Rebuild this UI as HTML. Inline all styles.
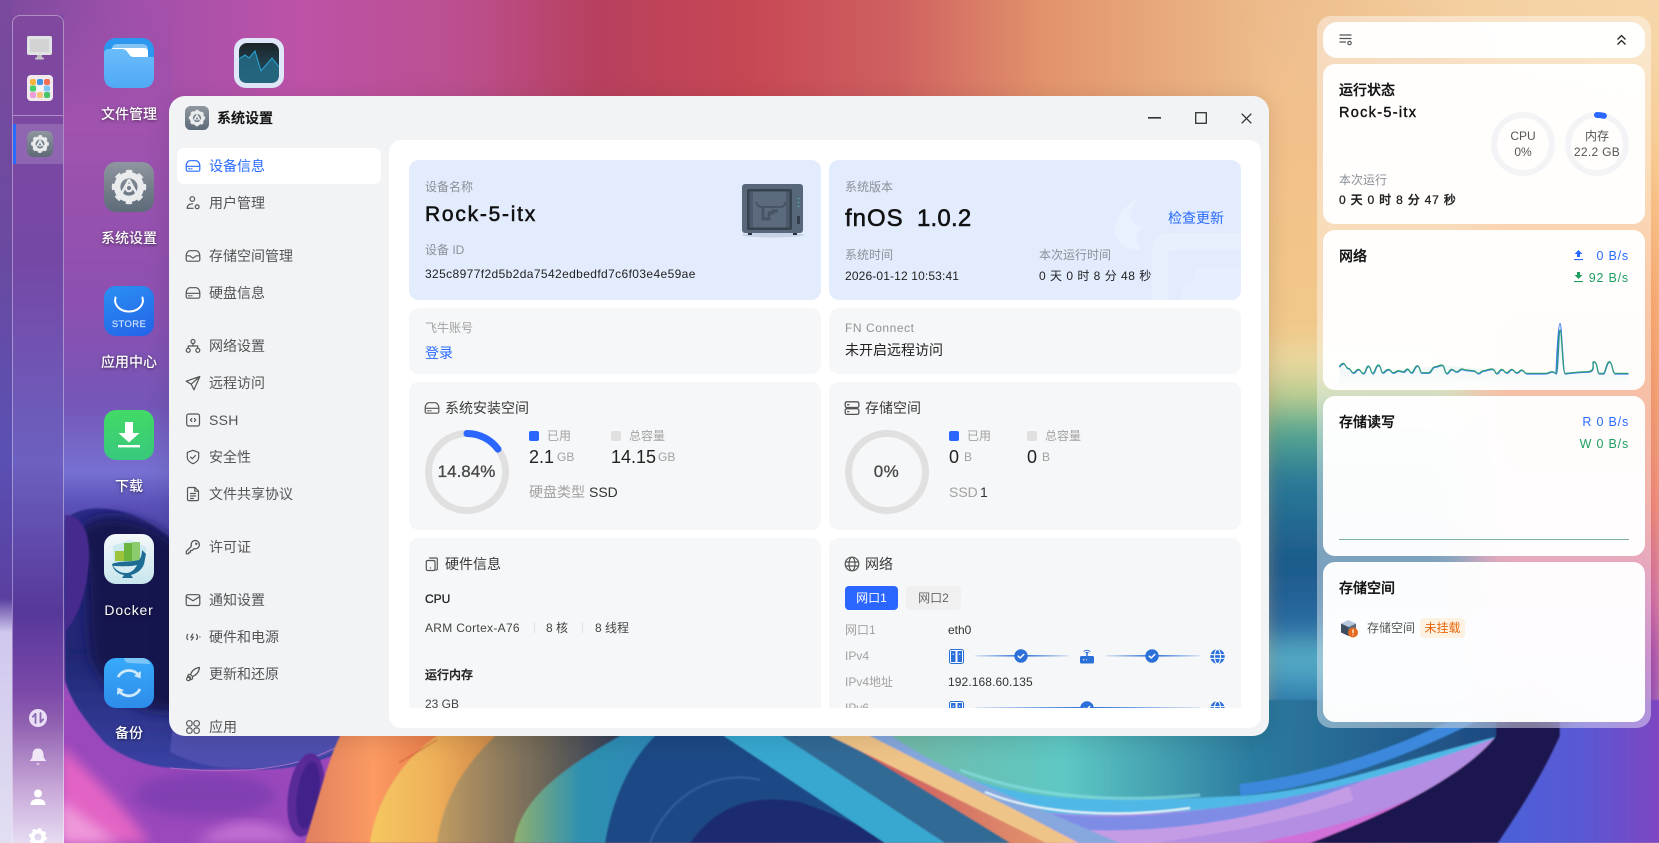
<!DOCTYPE html>
<html lang="zh-CN"><head><meta charset="utf-8"><title>fnOS</title>
<style>
html,body{margin:0;padding:0;width:1659px;height:843px;overflow:hidden;background:#7a4a9e}
body{font-family:"Liberation Sans","Noto Sans CJK SC",sans-serif;color:#333;position:relative}
.t{position:absolute;white-space:nowrap;line-height:20px;height:20px;font-size:12px}
.s14{font-size:14px}.g{color:#8c9098}.lg{color:#a2a2a2}.b{color:#2a6bff}.gr{color:#1f9e5f}
.d{color:#555}.k{color:#111}.m{font-weight:500;-webkit-text-stroke:.3px currentColor}
.mm{font-weight:500;-webkit-text-stroke:.55px currentColor}
.abs{position:absolute}
.lbl{position:absolute;width:100px;left:79px;text-align:center;color:#fff;font-size:14px;line-height:20px;font-weight:500;text-shadow:0 1px 3px rgba(0,0,0,.55)}
.card{position:absolute;border-radius:10px;background:#f6f7f8}
.rc{position:absolute;left:1323px;width:322px;border-radius:12px;background:rgba(255,255,255,.97)}
svg{position:absolute;overflow:visible}
.ic{fill:none;stroke:#555;stroke-width:1.2;stroke-linecap:round;stroke-linejoin:round}
.sq{position:absolute;width:10px;height:10px;border-radius:2px;top:431px}
</style></head><body>

<!-- WALLPAPER -->
<svg style="left:0;top:0" width="1659" height="843" viewBox="0 0 1659 843">
<defs>
<linearGradient id="top" x1="0" x2="1" y1="0" y2="0">
<stop offset="0" stop-color="#7a4a9e"/><stop offset=".08" stop-color="#a050aa"/><stop offset=".18" stop-color="#bd52a8"/><stop offset=".28" stop-color="#bb4f8e"/><stop offset=".36" stop-color="#b8405e"/><stop offset=".45" stop-color="#c64754"/><stop offset=".54" stop-color="#cf6060"/><stop offset=".63" stop-color="#e2936c"/><stop offset=".75" stop-color="#ecb888"/><stop offset=".88" stop-color="#f4cfa0"/><stop offset="1" stop-color="#f6d6a8"/></linearGradient>
<linearGradient id="lv" x1="0" x2="0" y1="0" y2="1">
<stop offset="0" stop-color="#9a50aa" stop-opacity="0"/><stop offset=".14" stop-color="#a052ae"/><stop offset=".36" stop-color="#8d50b0"/><stop offset=".48" stop-color="#7556b8"/><stop offset=".56" stop-color="#7670d2"/><stop offset=".6" stop-color="#5a50b8"/><stop offset=".7" stop-color="#3c3c9c"/><stop offset=".85" stop-color="#b050c0"/><stop offset="1" stop-color="#f0b0e0"/></linearGradient>
<linearGradient id="lf" x1="0" x2="0" y1="0" y2="1">
<stop offset="0" stop-color="#7a4a9e"/><stop offset=".3" stop-color="#6a4aa0"/><stop offset=".54" stop-color="#5a50b4"/><stop offset=".71" stop-color="#5a3fa0"/><stop offset=".75" stop-color="#d0c8ee"/><stop offset="1" stop-color="#e2def2"/></linearGradient>
<linearGradient id="ld" x1="0" x2="0" y1="0" y2="1">
<stop offset="0" stop-color="#80489e"/><stop offset=".3" stop-color="#7548a6"/><stop offset=".54" stop-color="#6c60c0"/><stop offset=".72" stop-color="#56389a"/><stop offset=".815" stop-color="#7a48a8"/><stop offset=".855" stop-color="#9060b0"/><stop offset=".935" stop-color="#c8a8d8"/><stop offset="1" stop-color="#e6dcf2"/></linearGradient>
<linearGradient id="rs" x1="0" x2="0" y1="0" y2="1">
<stop offset="0" stop-color="#f0c292" stop-opacity="0"/><stop offset=".16" stop-color="#f2c08a"/><stop offset=".39" stop-color="#f2c88a"/><stop offset=".43" stop-color="#e8d8a0"/><stop offset=".47" stop-color="#b8cc90"/><stop offset=".51" stop-color="#5aa890"/><stop offset=".57" stop-color="#2a7a98"/><stop offset=".67" stop-color="#1d5a8c"/><stop offset=".74" stop-color="#2a6aa0"/><stop offset=".78" stop-color="#5ab0c8"/><stop offset=".83" stop-color="#3080b0"/><stop offset=".88" stop-color="#1e3a7a"/><stop offset="1" stop-color="#1e3a7a"/></linearGradient>
<linearGradient id="rr" x1="0" x2="0" y1="0" y2="1">
<stop offset="0" stop-color="#f6d6a8" stop-opacity="0"/><stop offset=".2" stop-color="#f8c488"/><stop offset=".36" stop-color="#f5a068"/><stop offset=".48" stop-color="#f09068"/><stop offset=".6" stop-color="#e87a70"/><stop offset=".71" stop-color="#c860a0"/><stop offset=".78" stop-color="#a040a8"/><stop offset=".88" stop-color="#7a4ac0"/><stop offset="1" stop-color="#6a55c8"/></linearGradient>
<linearGradient id="or" x1="0" x2="1" y1="0" y2="0"><stop offset="0" stop-color="#e0805e"/><stop offset=".5" stop-color="#fb9a62"/><stop offset="1" stop-color="#e87a48"/></linearGradient>
<linearGradient id="ye" x1="0" x2="1" y1="0" y2="0"><stop offset="0" stop-color="#f5c860"/><stop offset=".5" stop-color="#efb05a"/><stop offset="1" stop-color="#cf8848"/></linearGradient>
<linearGradient id="br" x1="0" x2="1" y1="0" y2="0"><stop offset="0" stop-color="#c09c62"/><stop offset=".6" stop-color="#6a6458"/><stop offset="1" stop-color="#2e3c58"/></linearGradient>
<linearGradient id="te" x1="0" x2="1" y1="0" y2="0"><stop offset="0" stop-color="#90b070"/><stop offset=".45" stop-color="#2e90b0"/><stop offset="1" stop-color="#2c88b8"/></linearGradient>
<linearGradient id="tg" x1="0" x2="1" y1="0" y2="0"><stop offset="0" stop-color="#74b8a4"/><stop offset=".3" stop-color="#5ec8c4"/><stop offset=".6" stop-color="#2c7ca0"/><stop offset="1" stop-color="#1d4880"/></linearGradient>
<linearGradient id="vi" x1="0" x2="1" y1="0" y2="0"><stop offset="0" stop-color="#4a60d8"/><stop offset=".5" stop-color="#5a58d4"/><stop offset="1" stop-color="#8044c0"/></linearGradient>
<linearGradient id="sw" x1="0" x2="0" y1="0" y2="1"><stop offset="0" stop-color="#2a2a88"/><stop offset=".55" stop-color="#1f2672"/><stop offset="1" stop-color="#3a42a4"/></linearGradient>
<filter id="b1" x="-5%" y="-5%" width="110%" height="110%"><feGaussianBlur stdDeviation=".8"/></filter>
<filter id="b2" x="-5%" y="-5%" width="110%" height="110%"><feGaussianBlur stdDeviation="2"/></filter>
<filter id="b4" x="-20%" y="-20%" width="140%" height="140%"><feGaussianBlur stdDeviation="6"/></filter>
<filter id="b9" x="-20%" y="-5%" width="140%" height="110%"><feGaussianBlur stdDeviation="10"/></filter>
</defs>
<rect width="1659" height="843" fill="url(#top)"/>
<rect x="0" y="0" width="172" height="843" fill="url(#lv)"/>
<rect x="1455" y="0" width="210" height="843" fill="url(#rr)" filter="url(#b9)"/>
<rect x="1262" y="0" width="210" height="843" fill="url(#rs)" filter="url(#b9)"/>
<!-- bottom area base -->
<rect x="60" y="700" width="290" height="143" fill="#9a48bc"/>
<path d="M60 745 C85 770 110 790 150 843 H60Z" fill="#e264c4" filter="url(#b4)"/>
<path d="M60 800 L120 843 H60Z" fill="#ee98da" filter="url(#b4)"/>
<ellipse cx="205" cy="795" rx="70" ry="22" fill="#7c3cb0" opacity=".8" filter="url(#b4)"/>
<path d="M195 843 C230 815 270 815 300 843Z" fill="#c270d2" filter="url(#b4)"/>
<!-- swirl -->
<path d="M65 520 C85 498 150 505 190 560 L420 700 L345 748 C320 765 280 772 235 769 C200 770 165 770 143 763 C120 755 105 745 100 737 C85 720 70 700 65 680Z" fill="url(#sw)" filter="url(#b1)"/>
<path d="M175 700 H345 V745 C320 762 280 770 235 768 C210 768 190 762 170 752Z" fill="#5050b0" filter="url(#b1)"/>
<path d="M170 768 C210 772 280 776 335 748" stroke="#c47cd0" stroke-width="1" fill="none" opacity=".7"/>
<path d="M78 530 C105 505 150 518 182 548 V710 C145 716 110 700 92 660 C83 610 92 570 78 530Z" fill="#121850" filter="url(#b4)"/>
<path d="M65 515 C85 515 92 540 88 570 C85 600 75 620 65 632Z" fill="#46298e" filter="url(#b1)"/>
<ellipse cx="306" cy="795" rx="18" ry="42" transform="rotate(8 306 795)" fill="#5a2c98" filter="url(#b1)"/>
<ellipse cx="308" cy="795" rx="11" ry="34" transform="rotate(8 308 795)" fill="#43228a" filter="url(#b1)"/>
<g filter="url(#b1)">
<path d="M340 700 H442 V736 C402 770 377 800 372 843 H305 C318 800 328 760 340 736Z" fill="url(#or)"/>
<path d="M437 700 H497 V736 C462 770 442 800 439 843 H370 C376 800 402 760 437 736Z" fill="url(#ye)"/>
<path d="M495 700 H622 V736 C562 770 522 800 516 843 H437 C443 800 462 768 495 736Z" fill="url(#br)"/>
<path d="M620 700 H662 V736 C622 770 612 800 609 843 H514 C520 800 560 770 620 736Z" fill="url(#te)"/>
<path d="M655 700 H730 V736 L950 843 H605 C612 800 630 760 655 736Z" fill="#1f4a85"/>
<path d="M690 843 C720 800 760 795 800 802 C830 812 870 830 900 843Z" fill="#1f2a70"/>
<path d="M650 843 C670 790 720 770 760 780" stroke="#2f5f9c" stroke-width="2" fill="none"/>
<path d="M877 700 H1510 V736 L1390 843 H1045Z" fill="#b48ee2"/>
<path d="M1060 843 C1140 835 1260 820 1350 790" stroke="#c49ce6" stroke-width="22" fill="none"/>
<path d="M1000 812 C1080 832 1220 828 1340 782 C1400 760 1450 740 1500 705" stroke="#7f8ce6" stroke-width="14" fill="none"/>
<path d="M870 700 V736 C930 780 990 815 1095 815 C1230 815 1360 790 1500 736 V700Z" fill="#4fb8e6"/>
<path d="M877 700 H1500 V736 C1400 760 1330 790 1240 796 C1140 800 1060 805 990 785 C940 770 900 750 877 736Z" fill="url(#tg)"/>
<path d="M1240 790 C1340 778 1420 745 1505 700" stroke="#3a88dc" stroke-width="12" fill="none"/>
<path d="M724 700 H790 V736 L965 843 H885L724 736Z" fill="#38a8d0"/>
<path d="M782 700 H836 V736 L1010 843 H945L782 736Z" fill="#336a96"/>
<path d="M830 700 H878 V736 L1078 843 H1046L830 736Z" fill="#efc488"/>
<path d="M870 700 V736 L1080 843 H1120 C1020 800 940 770 892 736 V700Z" fill="#86a8de"/>
<path d="M985 792 C1040 815 1120 818 1190 808" stroke="#e6f6fa" stroke-width="2" fill="none"/>
<path d="M960 770 C1040 800 1120 802 1200 795" stroke="#8fe4e8" stroke-width="3" fill="none" opacity=".6"/>
<path d="M1510 700 V736 L1500 745 C1440 790 1380 820 1255 843 H1320 C1400 820 1470 790 1530 736 V700Z" fill="#d070d8"/>
<path d="M1496 700 H1565 V736 C1540 780 1520 820 1505 843 H1310 C1400 810 1470 770 1496 736Z" fill="#1f1650"/>
<path d="M1560 700 H1665 V843 H1498 C1520 810 1540 780 1560 736Z" fill="url(#vi)"/>
<path d="M437 740 L399 763" stroke="#b83a2a" stroke-width="1" opacity=".7"/>
</g>
<!-- strip left/dock base -->
<rect x="0" y="0" width="12" height="843" fill="url(#lf)"/>
<rect x="12" y="15" width="52" height="828" fill="url(#ld)"/>
</svg>

<!-- DOCK -->
<div class="abs" style="left:12px;top:15px;width:50px;height:840px;border:1px solid rgba(255,255,255,.38);border-radius:8px 8px 0 0"></div>
<div class="abs" style="left:13px;top:115px;width:50px;height:1px;background:rgba(255,255,255,.38)"></div>
<div class="abs" style="left:13px;top:124px;width:50px;height:40px;background:rgba(255,255,255,.16)"></div>
<div class="abs" style="left:13px;top:124px;width:3px;height:40px;background:#2a6bff"></div>
<svg style="left:27px;top:36px" width="25" height="25" viewBox="0 0 25 25"><rect width="25" height="19" rx="2" fill="#e2e3e4"/><rect x="3" y="3" width="19" height="13" fill="#d4d3d4"/><rect x="10" y="19" width="5" height="3" fill="#bbb"/><rect x="8" y="21.500" width="9" height="2" rx="1" fill="#c8c8c8"/></svg>
<svg style="left:27px;top:75px" width="26" height="26" viewBox="0 0 26 26"><rect width="26" height="26" rx="4" fill="#f1e9ee"/><g><rect x="3" y="4" width="6" height="6" rx="2" fill="#f6b43f"/><rect x="10" y="4" width="6" height="6" rx="2" fill="#3f94e8"/><rect x="17" y="4" width="6" height="6" rx="2" fill="#ef6f55"/><rect x="3" y="10.500" width="6" height="6" rx="2" fill="#45cf6a"/><rect x="10" y="10.500" width="6" height="6" rx="2" fill="#eef4fa"/><rect x="17" y="10.500" width="6" height="6" rx="2" fill="#7cc7f5"/><rect x="3" y="17" width="6" height="6" rx="2" fill="#ec9fd6"/><rect x="10" y="17" width="6" height="6" rx="2" fill="#f6c27a"/><rect x="17" y="17" width="6" height="6" rx="2" fill="#45c46a"/></g></svg>
<svg width="0" height="0" style="left:0;top:0"><defs>
<linearGradient id="gg" x1="0" x2="0" y1="0" y2="1"><stop offset="0" stop-color="#8f97a0"/><stop offset="1" stop-color="#5d6a78"/></linearGradient>
<symbol id="gear" viewBox="0 0 50 50"><rect width="50" height="50" rx="12" fill="url(#gg)"/><circle cx="25" cy="25" r="11.800" fill="none" stroke="#e9ebed" stroke-width="6.400"/><circle cx="25" cy="25" r="15.300" fill="none" stroke="#e9ebed" stroke-width="3.800" stroke-dasharray="6 6.020" transform="rotate(-11 25 25)"/><path d="M25 17.500L32.500 31.500M25 17.500L17.500 31.500" stroke="#e9ebed" stroke-width="2.400"/><circle cx="25" cy="26" r="3.200" fill="none" stroke="#e9ebed" stroke-width="2.200"/></symbol>
<symbol id="hdd" viewBox="0 0 16 16"><path d="M1.200 8C1.200 5 3 2.700 5 2.700H11C13 2.700 14.800 5 14.800 8V11.700A1.500 1.500 0 0 1 13.300 13.200H2.700A1.500 1.500 0 0 1 1.200 11.700ZM1.200 8.300H14.800M3.600 10.800H5M6.400 10.800H7"/></symbol>
<symbol id="usr" viewBox="0 0 16 16"><circle cx="7.300" cy="4" r="2.300"/><path d="M2.200 13.300C2.300 10.500 4.200 8.800 7.600 8.800"/><path d="M2.200 13.300H8"/><circle cx="12.200" cy="11.800" r="1.900"/></symbol>
<symbol id="box" viewBox="0 0 16 16"><path d="M1.200 8C1.200 5 3 2.700 5 2.700H11C13 2.700 14.800 5 14.800 8V11.700A1.500 1.500 0 0 1 13.300 13.200H2.700A1.500 1.500 0 0 1 1.200 11.700ZM1.200 7.800H4.800L8 10.200L11.200 7.800H14.800"/></symbol>
<symbol id="net" viewBox="0 0 16 16"><circle cx="8" cy="3.500" r="2"/><circle cx="3.200" cy="12.300" r="2"/><circle cx="12.800" cy="12.300" r="2"/><path d="M8 5.500V8M3.200 10.300V8H12.800V10.300"/></symbol>
<symbol id="snd" viewBox="0 0 16 16"><path d="M14.800 1.500L1.200 6.200L6.200 9.200L9 14.800ZM6.200 9.200L14.800 1.500"/></symbol>
<symbol id="ssh" viewBox="0 0 16 16"><rect x="1.700" y="2" width="12.800" height="12" rx="2"/><path d="M6.800 6.500L5.500 8L6.800 9.500M9.400 6.500L10.700 8L9.400 9.500"/></symbol>
<symbol id="shd" viewBox="0 0 16 16"><path d="M8 1.300L13.700 3.400V8C13.700 11 11.300 13.500 8 14.700C4.700 13.500 2.300 11 2.300 8V3.400ZM5.500 8L7.300 9.700L10.500 6.500"/></symbol>
<symbol id="doc" viewBox="0 0 16 16"><path d="M3.800 1.500H10L13.500 5V13.300A1.300 1.300 0 0 1 12.200 14.600H3.800A1.300 1.300 0 0 1 2.500 13.300V2.800A1.300 1.300 0 0 1 3.800 1.500ZM5.500 7.500H10.500M5.500 10H10.500M5.500 12.500H8.500M9.800 1.700V5.200H13.300"/></symbol>
<symbol id="key" viewBox="0 0 16 16"><path d="M10.300 1.500A4.200 4.200 0 1 1 8.900 9.700L7.200 11.500H5.500V13.200H3.800V14.800H1.300V12.300L6.400 7.200A4.200 4.200 0 0 1 10.300 1.500Z"/><circle cx="11.300" cy="4.800" r=".6"/></symbol>
<symbol id="mal" viewBox="0 0 16 16"><rect x="1.200" y="2.700" width="13.600" height="10.800" rx="1.600"/><path d="M1.500 4.800L8 8.800L14.500 4.800"/></symbol>
<symbol id="pow" viewBox="0 0 16 16"><path d="M2.800 5.500C1.500 6.500 1.500 9.500 2.800 10.500M11.500 5.500C12.800 6.500 12.800 9.500 11.500 10.500M7.800 5L5.800 8.200H8.500L6.500 11M14.800 8H15"/></symbol>
<symbol id="rkt" viewBox="0 0 16 16"><path d="M14.500 1.500C10 2 7 4.500 5.500 8.500L7.500 10.500C11.500 9 14 6 14.500 1.500ZM5.500 8.500L3.500 8.500L2.500 10.500L5 10.800M7.500 10.500L7.500 12.800L5.500 13.800L5.200 11"/><circle cx="3.300" cy="13" r="1.700"/></symbol>
<symbol id="app" viewBox="0 0 16 16"><rect x="1.700" y="1.700" width="5.400" height="5.400" rx="2.400"/><rect x="8.900" y="1.700" width="5.400" height="5.400" rx="2.400"/><rect x="1.700" y="8.900" width="5.400" height="5.400" rx="2.400"/><rect x="8.900" y="8.900" width="5.400" height="5.400" rx="2.400"/></symbol>
<symbol id="hw" viewBox="0 0 16 16"><path d="M5.500 2H12.300A1 1 0 0 1 13.300 3V12.800A1.200 1.200 0 0 1 12 14"/><rect x="2.300" y="4.500" width="8.700" height="10" rx="1.400"/><path d="M6.500 11.800V12"/></symbol>
<symbol id="sto" viewBox="0 0 16 16"><rect x="1.200" y="1.800" width="13.600" height="5.700" rx="1.600"/><rect x="1.200" y="8.700" width="13.600" height="5.700" rx="1.600"/><path d="M3.600 4.700H4.800M3.600 11.600H4.800"/></symbol>
<symbol id="glo" viewBox="0 0 16 16"><circle cx="8" cy="8" r="6.800"/><ellipse cx="8" cy="8" rx="3" ry="6.800"/><path d="M1.500 6H14.500M1.500 10H14.500"/></symbol>
<symbol id="ck" viewBox="0 0 14 14"><circle cx="7" cy="7" r="6.700" fill="#2b6fd8"/><path d="M4.200 7.200L6.200 9L9.800 5.400" fill="none" stroke="#fff" stroke-width="1.500" stroke-linecap="round" stroke-linejoin="round"/></symbol>
<symbol id="nic" viewBox="0 0 15 15"><rect x=".5" y=".5" width="14" height="14" rx="2" fill="#fff" stroke="#2b6fd8"/><rect x="2" y="2" width="4.500" height="11" fill="#2b6fd8"/><rect x="8.500" y="2" width="4.500" height="11" fill="#2b6fd8"/><path d="M4.200 4.500V6M10.700 4.500V6" stroke="#fff"/></symbol>
<symbol id="wg" viewBox="0 0 15 15"><circle cx="7.500" cy="7.500" r="7.200" fill="#2b6fd8"/><ellipse cx="7.500" cy="7.500" rx="3" ry="7.200" fill="none" stroke="#fff" stroke-width="1.100"/><path d="M.5 5.600H14.500M.5 9.400H14.500" stroke="#fff" stroke-width="1"/></symbol>
<linearGradient id="ln" x1="0" x2="1" y1="0" y2="0"><stop offset="0" stop-color="#2b6fd8" stop-opacity=".12"/><stop offset=".5" stop-color="#2b6fd8"/><stop offset="1" stop-color="#2b6fd8" stop-opacity=".12"/></linearGradient>
</defs></svg>
<svg style="left:27px;top:131px" width="26" height="26"><use href="#gear"/></svg>
<svg style="left:29px;top:709px" width="18" height="18" viewBox="0 0 18 18"><circle cx="9" cy="9" r="9" fill="#e9def4"/><path d="M6.500 14V5M3.800 7.700L6.500 4.800M11.500 4V13M14.200 10.300L11.500 13.200" stroke="#8a6ab2" stroke-width="1.800" fill="none" stroke-linecap="round"/></svg>
<svg style="left:29px;top:748px" width="18" height="19" viewBox="0 0 18 19"><path d="M9 0.500C5 .5 3.500 3.500 3.500 7C3.500 10.500 1.800 11.500 .7 13H17.300C16.200 11.500 14.500 10.500 14.500 7C14.500 3.500 13 .5 9 .5Z" fill="#f0e8f6"/><path d="M7 15.500C8 17.200 10 17.200 11 15.500Z" fill="#f0e8f6"/></svg>
<svg style="left:30px;top:789px" width="16" height="17" viewBox="0 0 16 17"><circle cx="8" cy="4.500" r="4" fill="#fff"/><path d="M.5 16C.5 11 4 10 8 10S15.500 11 15.500 16Z" fill="#fff"/></svg>
<svg style="left:29px;top:828px" width="18" height="18" viewBox="0 0 18 18"><circle cx="9" cy="9" r="5.500" fill="none" stroke="#fff" stroke-width="4"/><circle cx="9" cy="9" r="7.800" fill="none" stroke="#fff" stroke-width="2.400" stroke-dasharray="3.100 3.030"/></svg>

<!-- DESKTOP ICONS -->
<svg style="left:104px;top:38px" width="50" height="50" viewBox="0 0 50 50"><defs><linearGradient id="f1" x1="0" x2="0" y1="0" y2="1"><stop offset="0" stop-color="#6bbdfb"/><stop offset="1" stop-color="#4fa9f4"/></linearGradient></defs><rect width="50" height="50" rx="12" fill="#2c97ee"/><path d="M8 12Q8 6 13 6H38Q44 6 44 12V20H8Z" fill="#84c4f5"/><path d="M6 14Q6 10 10 10H40Q44 10 44 14V25H6Z" fill="#fff"/><path d="M0 16Q0 11 5 11H18Q21 11 23 13.500L26 17.500Q27 19 30 19H50V38Q50 50 38 50H12Q0 50 0 38Z" fill="url(#f1)"/></svg>
<svg style="left:234px;top:38px" width="50" height="50" viewBox="0 0 50 50"><defs><linearGradient id="a1" x1="0" x2="0" y1="0" y2="1"><stop offset="0" stop-color="#1c2428"/><stop offset="1" stop-color="#23566c"/></linearGradient></defs><rect width="50" height="50" rx="12" fill="#dfe7f8"/><rect x="5" y="5" width="40" height="40" rx="8" fill="url(#a1)"/><path d="M5 21L11 17L15 20L21 13L27 33L38 20L45 29V37Q45 45 37 45H13Q5 45 5 37Z" fill="#246a84" opacity=".85"/><path d="M5 21L11 17L15 20L21 13L27 33L38 20L45 29" stroke="#29a9dc" stroke-width="1" fill="none"/></svg>
<svg style="left:104px;top:162px" width="50" height="50"><use href="#gear"/></svg>
<div class="abs" style="left:104px;top:286px;width:50px;height:50px;border-radius:12px;background:linear-gradient(160deg,#2a90f2,#2462e8)"></div>
<svg style="left:104px;top:286px" width="50" height="50" viewBox="0 0 50 50"><path d="M11.500 11.500C11.500 13 11 14 11 15C13 29 37 29 39 15C39 14 38.500 13 38.500 11.500" stroke="#fff" stroke-width="2" fill="none" stroke-linecap="round"/></svg>
<div class="t m" style="left:104px;top:315px;width:50px;text-align:center;color:#cfe4ff;font-size:9.500px;letter-spacing:.35px;-webkit-text-stroke:.15px">STORE</div>
<svg style="left:104px;top:410px" width="50" height="50" viewBox="0 0 50 50"><defs><linearGradient id="d1" x1="0" x2="0" y1="0" y2="1"><stop offset="0" stop-color="#42da66"/><stop offset="1" stop-color="#38c87c"/></linearGradient></defs><rect width="50" height="50" rx="12" fill="url(#d1)"/><path d="M21 12H29V23H35.500L25 32.500L14.500 23H21Z" fill="#fff"/><rect x="14" y="35" width="22" height="2.400" fill="#fff"/></svg>
<svg style="left:104px;top:534px" width="50" height="50" viewBox="0 0 50 50"><defs><linearGradient id="w1" x1="0" x2="0" y1="0" y2="1"><stop offset="0" stop-color="#f4f8fa"/><stop offset="1" stop-color="#c9e6ee"/></linearGradient></defs><rect width="50" height="50" rx="12" fill="url(#w1)"/><path d="M9 12L25 6L42 13L41 32L25 44L10 33Z" fill="#bfe5ec" opacity=".7"/><rect x="11" y="17" width="10" height="10" fill="#9cc53c"/><rect x="20" y="9" width="10" height="18" fill="#6ab53e"/><rect x="28" y="8" width="8" height="19" fill="#8ccc6e"/><path d="M8 30C14 27 28 28 35 26C37 24 38 20 38 16L42 20L40 30C37 38 30 40 27 41L29 44H18L20 41C14 40 9 36 8 30Z" fill="#1d6c94"/><path d="M9 32C14 32 26 33 33 31C30 37 26 39 22 39C16 39 12 36 9 32Z" fill="#d6ecf2"/></svg>
<svg style="left:104px;top:658px" width="50" height="50" viewBox="0 0 50 50"><defs><linearGradient id="u1" x1="0" x2="0" y1="0" y2="1"><stop offset="0" stop-color="#38aafa"/><stop offset="1" stop-color="#2e8cea"/></linearGradient></defs><rect width="50" height="50" rx="12" fill="url(#u1)"/><path d="M20 0H38Q44 0 46 6L25 5Q21 5 20 0Z" fill="#7cc6f8"/><path d="M35 17.500A12.500 12.500 0 0 0 14 19M15 33A12.500 12.500 0 0 0 36 31" fill="none" stroke="#cfe9fd" stroke-width="2.800"/><path d="M37 13L36.500 20.500L30 18Z" fill="#cfe9fd"/><path d="M13 37L13.500 29.500L20 32Z" fill="#cfe9fd"/></svg>
<div class="lbl" style="top:104px">文件管理</div>
<div class="lbl" style="top:228px">系统设置</div>
<div class="lbl" style="top:352px">应用中心</div>
<div class="lbl" style="top:476px">下载</div>
<div class="lbl" style="top:600px;letter-spacing:.8px">Docker</div>
<div class="lbl" style="top:723px">备份</div>

<!-- WINDOW -->
<div class="abs" style="left:169px;top:96px;width:1100px;height:640px;border-radius:16px;box-shadow:0 4px 24px rgba(0,0,0,.12)"></div>
<div class="abs" style="left:0;top:0;width:1659px;height:843px;clip-path:inset(96px 390px 107px 169px round 16px)">
<div class="abs" style="left:169px;top:96px;width:1100px;height:640px;background:#f1f3f5"></div>
<svg style="left:185px;top:106px" width="24" height="24"><use href="#gear"/></svg>
<div class="t s14 m k" style="left:217px;top:108px">系统设置</div>
<svg style="left:1148px;top:117px" width="13" height="2"><rect width="13" height="1.600" fill="#333"/></svg>
<svg style="left:1195px;top:112px" width="12" height="12"><rect x=".7" y=".7" width="10.600" height="10.600" fill="none" stroke="#333" stroke-width="1.300"/></svg>
<svg style="left:1241px;top:113px" width="11" height="11"><path d="M.7 .7L10.300 10.300M10.300 .7L.7 10.300" stroke="#333" stroke-width="1.300"/></svg>

<div class="abs" style="left:177px;top:148px;width:204px;height:36px;background:#fff;border-radius:7px"></div>
<svg class="ic" style="left:185px;top:158px;stroke:#2a6bff" width="16" height="16"><use href="#hdd"/></svg><div class="t s14 b" style="left:209px;top:156px">设备信息</div>
<svg class="ic" style="left:185px;top:195px" width="16" height="16"><use href="#usr"/></svg><div class="t s14 d" style="left:209px;top:193px">用户管理</div>
<svg class="ic" style="left:185px;top:248px" width="16" height="16"><use href="#box"/></svg><div class="t s14 d" style="left:209px;top:246px">存储空间管理</div>
<svg class="ic" style="left:185px;top:285px" width="16" height="16"><use href="#hdd"/></svg><div class="t s14 d" style="left:209px;top:283px">硬盘信息</div>
<svg class="ic" style="left:185px;top:338px" width="16" height="16"><use href="#net"/></svg><div class="t s14 d" style="left:209px;top:336px">网络设置</div>
<svg class="ic" style="left:185px;top:375px" width="16" height="16"><use href="#snd"/></svg><div class="t s14 d" style="left:209px;top:373px">远程访问</div>
<svg class="ic" style="left:185px;top:412px" width="16" height="16"><use href="#ssh"/></svg><div class="t s14 d" style="left:209px;top:410px;letter-spacing:.3px">SSH</div>
<svg class="ic" style="left:185px;top:449px" width="16" height="16"><use href="#shd"/></svg><div class="t s14 d" style="left:209px;top:447px">安全性</div>
<svg class="ic" style="left:185px;top:486px" width="16" height="16"><use href="#doc"/></svg><div class="t s14 d" style="left:209px;top:484px">文件共享协议</div>
<svg class="ic" style="left:185px;top:539px" width="16" height="16"><use href="#key"/></svg><div class="t s14 d" style="left:209px;top:537px">许可证</div>
<svg class="ic" style="left:185px;top:592px" width="16" height="16"><use href="#mal"/></svg><div class="t s14 d" style="left:209px;top:590px">通知设置</div>
<svg class="ic" style="left:185px;top:629px" width="16" height="16"><use href="#pow"/></svg><div class="t s14 d" style="left:209px;top:627px">硬件和电源</div>
<svg class="ic" style="left:185px;top:666px" width="16" height="16"><use href="#rkt"/></svg><div class="t s14 d" style="left:209px;top:664px">更新和还原</div>
<svg class="ic" style="left:185px;top:719px" width="16" height="16"><use href="#app"/></svg><div class="t s14 d" style="left:209px;top:717px">应用</div>

<div class="abs" style="left:389px;top:140px;width:872px;height:588px;background:#fff;border-radius:12px"></div>

<!-- CONTENT clipped -->
<div class="abs" style="left:0;top:0;width:1659px;height:843px;clip-path:inset(140px 0 135px 0)">
<!-- Row 1 -->
<div class="card" style="left:409px;top:160px;width:412px;height:140px;background:#e2ecfd"></div>
<div class="t g" style="left:425px;top:177px">设备名称</div>
<div class="t mm k" style="left:425px;top:205px;font-size:21px;letter-spacing:1.75px">Rock-5-itx</div>
<div class="t g" style="left:425px;top:240px">设备 ID</div>
<div class="t" style="left:425px;top:264px;letter-spacing:.38px;color:#222">325c8977f2d5b2da7542edbedfd7c6f03e4e59ae</div>
<svg style="left:742px;top:184px" width="62" height="54" viewBox="0 0 62 54"><ellipse cx="31" cy="51" rx="31" ry="2.500" fill="#c6d2e6"/><rect x="0" y="0" width="61" height="49" rx="3" fill="#586779"/><rect x="5" y="5" width="45" height="41" rx="2" fill="#36434f"/><rect x="7.500" y="7.500" width="40" height="36" fill="#4c5a6b"/><rect x="11" y="7.500" width="33" height="36" fill="#5c6a7e"/><path d="M14.500 18Q15 23 21 23H38Q43 23 43.500 18" fill="none" stroke="#465465" stroke-width="2"/><path d="M21 23V35H27V29H31V27H36" fill="none" stroke="#465465" stroke-width="3"/><path d="M56.500 14V15M56.500 18V19M56.500 22V23" stroke="#38c2bd" stroke-width="1.500"/><rect x="55" y="32" width="3" height="8" fill="#333f4c"/><rect x="6" y="49" width="4" height="2" fill="#2a333d"/><rect x="51" y="49" width="4" height="2" fill="#2a333d"/></svg>

<div class="card" style="left:829px;top:160px;width:412px;height:140px;background:#e2ecfd;overflow:hidden">
<svg style="left:0;top:0" width="412" height="140"><path d="M309 38C294 46 279 66 289 80C293 87 303 90 312 90C306 82 306 76 314 66C300 66 298 55 309 38Z" fill="#eaf1fe"/><path d="M323 140V92Q323 73 342 73H420V140Z" fill="#e8effd"/><path d="M339 140V96Q339 90 345 90H420V140Z" fill="#e3ecfd"/><path d="M353 140V130Q353 122 365 122V118Q365 108 375 108H420V140Z" fill="#e7eefd"/></svg></div>
<div class="t g" style="left:845px;top:177px">系统版本</div>
<div class="t mm k" style="left:845px;top:209px;font-size:24px;letter-spacing:1px">fnOS</div>
<div class="t mm k" style="left:917px;top:209px;font-size:24px;letter-spacing:.2px">1.0.2</div>
<div class="t s14 b" style="left:1168px;top:208px">检查更新</div>
<div class="t g" style="left:845px;top:245px">系统时间</div>
<div class="t" style="left:845px;top:266px;letter-spacing:.14px;color:#222">2026-01-12 10:53:41</div>
<div class="t g" style="left:1039px;top:245px">本次运行时间</div>
<div class="t" style="left:1039px;top:266px;letter-spacing:.5px;color:#222">0 天 0 时 8 分 48 秒</div>

<!-- Row 2 -->
<div class="card" style="left:409px;top:308px;width:412px;height:66px"></div>
<div class="t lg" style="left:425px;top:318px">飞牛账号</div>
<div class="t s14 b" style="left:425px;top:343px">登录</div>
<div class="card" style="left:829px;top:308px;width:412px;height:66px"></div>
<div class="t" style="left:845px;top:318px;color:#929292;letter-spacing:.55px">FN Connect</div>
<div class="t s14" style="left:845px;top:340px;color:#222">未开启远程访问</div>

<!-- Row 3 -->
<div class="card" style="left:409px;top:382px;width:412px;height:148px"></div>
<svg class="ic" style="left:424px;top:400px" width="16" height="16"><use href="#hdd"/></svg>
<div class="t s14" style="left:445px;top:398px;color:#3a3a3a">系统安装空间</div>
<svg style="left:425px;top:430px" width="84" height="84" viewBox="0 0 84 84"><circle cx="42" cy="42" r="38.500" fill="none" stroke="#e0e0e0" stroke-width="7"/><circle cx="42" cy="42" r="38.500" fill="none" stroke="#2a66ff" stroke-width="7" stroke-linecap="round" stroke-dasharray="35.900 300" transform="rotate(-90 42 42)"/></svg>
<div class="t m" style="left:425px;top:462px;width:83px;text-align:center;font-size:17px;color:#484848">14.84%</div>
<div class="sq" style="left:529px;background:#2a66ff"></div>
<div class="t lg" style="left:547px;top:426px">已用</div>
<div class="sq" style="left:611px;background:#e0e0e0"></div>
<div class="t lg" style="left:629px;top:426px">总容量</div>
<div class="t" style="left:529px;top:447px;font-size:18px;color:#222">2.1</div>
<div class="t lg" style="left:557px;top:447px">GB</div>
<div class="t" style="left:611px;top:447px;font-size:18px;color:#222">14.15</div>
<div class="t lg" style="left:658px;top:447px">GB</div>
<div class="t s14 lg" style="left:529px;top:482px">硬盘类型</div>
<div class="t s14" style="left:589px;top:482px;color:#333">SSD</div>

<div class="card" style="left:829px;top:382px;width:412px;height:148px"></div>
<svg class="ic" style="left:844px;top:400px;stroke-width:1.3" width="16" height="16"><use href="#sto"/></svg>
<div class="t s14" style="left:865px;top:398px;color:#3a3a3a">存储空间</div>
<svg style="left:845px;top:430px" width="84" height="84" viewBox="0 0 84 84"><circle cx="42" cy="42" r="38.500" fill="none" stroke="#e0e0e0" stroke-width="7"/></svg>
<div class="t m" style="left:845px;top:462px;width:83px;text-align:center;font-size:17px;letter-spacing:.5px;color:#484848">0%</div>
<div class="sq" style="left:949px;background:#2a66ff"></div>
<div class="t lg" style="left:967px;top:426px">已用</div>
<div class="sq" style="left:1027px;background:#e0e0e0"></div>
<div class="t lg" style="left:1045px;top:426px">总容量</div>
<div class="t" style="left:949px;top:447px;font-size:18px;color:#222">0</div>
<div class="t lg" style="left:964px;top:447px">B</div>
<div class="t" style="left:1027px;top:447px;font-size:18px;color:#222">0</div>
<div class="t lg" style="left:1042px;top:447px">B</div>
<div class="t s14 lg" style="left:949px;top:482px">SSD</div>
<div class="t s14" style="left:980px;top:482px;color:#333">1</div>

<!-- Row 4 -->
<div class="card" style="left:409px;top:538px;width:412px;height:220px"></div>
<svg class="ic" style="left:424px;top:556px" width="16" height="16"><use href="#hw"/></svg>
<div class="t s14" style="left:445px;top:554px;color:#3a3a3a">硬件信息</div>
<div class="t m" style="left:425px;top:589px;color:#222">CPU</div>
<div class="t" style="left:425px;top:618px;color:#444;letter-spacing:.3px">ARM Cortex-A76</div>
<div class="abs" style="left:534px;top:622px;width:1px;height:11px;background:#e2e2e2"></div>
<div class="t" style="left:546px;top:618px;color:#444">8 核</div>
<div class="abs" style="left:582px;top:622px;width:1px;height:11px;background:#e2e2e2"></div>
<div class="t" style="left:595px;top:618px;color:#444">8 线程</div>
<div class="t m" style="left:425px;top:665px;color:#222">运行内存</div>
<div class="t" style="left:425px;top:694px;color:#444">23 GB</div>

<div class="card" style="left:829px;top:538px;width:412px;height:220px"></div>
<svg class="ic" style="left:844px;top:556px" width="16" height="16"><use href="#glo"/></svg>
<div class="t s14" style="left:865px;top:554px;color:#3a3a3a">网络</div>
<div class="abs" style="left:845px;top:586px;width:53px;height:24px;line-height:24px;border-radius:4px;background:#2a66ff;color:#fff;font-size:12px;text-align:center">网口1</div>
<div class="abs" style="left:906px;top:586px;width:55px;height:24px;line-height:24px;border-radius:4px;background:#f0f0f0;color:#666;font-size:12px;text-align:center">网口2</div>
<div class="t lg" style="left:845px;top:620px">网口1</div>
<div class="t" style="left:948px;top:620px;color:#333">eth0</div>
<div class="t lg" style="left:845px;top:646px">IPv4</div>
<svg style="left:949px;top:649px" width="15" height="15"><use href="#nic"/></svg>
<svg style="left:975px;top:655px" width="94" height="2"><rect width="94" height="1.600" fill="url(#ln)"/></svg>
<svg style="left:1014px;top:649px" width="14" height="14"><use href="#ck"/></svg>
<svg style="left:1079px;top:648px" width="16" height="16" viewBox="0 0 16 16"><rect x="1" y="8" width="14" height="7.500" rx="1.500" fill="#2b6fd8"/><rect x="7.300" y="4" width="1.400" height="4" fill="#2b6fd8"/><path d="M4.800 3.500Q8 1 11.200 3.500M6.300 5Q8 4 9.700 5" fill="none" stroke="#2b6fd8" stroke-width="1"/><path d="M4 11.700H5.500M7 11.700H8" stroke="#fff"/></svg>
<svg style="left:1106px;top:655px" width="94" height="2"><rect width="94" height="1.600" fill="url(#ln)"/></svg>
<svg style="left:1145px;top:649px" width="14" height="14"><use href="#ck"/></svg>
<svg style="left:1210px;top:649px" width="15" height="15"><use href="#wg"/></svg>
<div class="t lg" style="left:845px;top:672px">IPv4地址</div>
<div class="t" style="left:948px;top:672px;color:#333;letter-spacing:.1px">192.168.60.135</div>
<div class="t lg" style="left:845px;top:698px">IPv6</div>
<svg style="left:949px;top:701px" width="15" height="15"><use href="#nic"/></svg>
<svg style="left:975px;top:707px" width="225" height="2"><rect width="225" height="1.600" fill="url(#ln)"/></svg>
<svg style="left:1080px;top:701px" width="14" height="14"><use href="#ck"/></svg>
<svg style="left:1210px;top:701px" width="15" height="15"><use href="#wg"/></svg>
</div>
</div>

<!-- RIGHT PANEL -->
<div class="abs" style="left:1317px;top:16px;width:334px;height:712px;border-radius:14px;background:rgba(255,255,255,.42);-webkit-backdrop-filter:blur(18px);backdrop-filter:blur(18px)"></div>
<div class="rc" style="top:22px;height:36px;border-radius:14px"></div>
<svg style="left:1339px;top:33px" width="14" height="14" viewBox="0 0 14 14"><path d="M.5 2H12.500M.5 5.500H12.500M.5 9H7" stroke="#555" stroke-width="1.300" fill="none"/><circle cx="10.500" cy="10" r="1.700" fill="none" stroke="#555" stroke-width="1.200"/></svg>
<svg style="left:1616px;top:34px" width="11" height="12" viewBox="0 0 11 12"><path d="M1.500 5.500L5.500 1.500L9.500 5.500M1.500 10.500L5.500 6.500L9.500 10.500" stroke="#222" stroke-width="1.300" fill="none"/></svg>

<div class="rc" style="top:64px;height:160px"></div>
<div class="t s14 m k" style="left:1339px;top:80px">运行状态</div>
<div class="t mm k" style="left:1339px;top:103px;font-size:14.500px;letter-spacing:1.3px;-webkit-text-stroke:.4px">Rock-5-itx</div>
<svg style="left:1491px;top:112px" width="64" height="64" viewBox="0 0 64 64"><circle cx="32" cy="32" r="29" fill="none" stroke="#f4f4f6" stroke-width="6"/></svg>
<svg style="left:1565px;top:112px" width="64" height="64" viewBox="0 0 64 64"><circle cx="32" cy="32" r="29" fill="none" stroke="#f4f4f6" stroke-width="6"/><circle cx="32" cy="32" r="29" fill="none" stroke="#2a66ff" stroke-width="6" stroke-linecap="round" stroke-dasharray="7 300" transform="rotate(-90 32 32)"/></svg>
<div class="t d" style="left:1491px;top:126px;width:64px;text-align:center">CPU</div>
<div class="t d" style="left:1491px;top:142px;width:64px;text-align:center">0%</div>
<div class="t d" style="left:1565px;top:126px;width:64px;text-align:center">内存</div>
<div class="t d" style="left:1565px;top:142px;width:64px;text-align:center;letter-spacing:.3px">22.2 GB</div>
<div class="t g" style="left:1339px;top:170px">本次运行</div>
<div class="t m" style="left:1339px;top:190px;letter-spacing:.8px;color:#222">0 天 0 时 8 分 47 秒</div>

<div class="rc" style="top:230px;height:160px"></div>
<div class="t s14 m k" style="left:1339px;top:246px">网络</div>
<svg style="left:1574px;top:250px" width="9" height="11" viewBox="0 0 9 11"><path d="M4.500 0L8.500 4H6V7H3V4H.5Z" fill="#2a6bff"/><rect y="9" width="9" height="1.100" fill="#2a6bff"/></svg>
<div class="t b" style="right:30px;top:246px;letter-spacing:.8px;font-size:12.500px">0 B/s</div>
<svg style="left:1574px;top:272px" width="9" height="11" viewBox="0 0 9 11"><path d="M4.500 7L8.500 3H6V0H3V3H.5Z" fill="#1f9e5f"/><rect y="9" width="9" height="1.100" fill="#1f9e5f"/></svg>
<div class="t gr" style="right:30px;top:268px;letter-spacing:.8px;font-size:12.500px">92 B/s</div>
<svg style="left:1310px;top:0" width="349" height="390" viewBox="0 0 1047 1170">
<defs><linearGradient id="ar" x1="0" x2="0" y1="0" y2="1"><stop offset="0" stop-color="#9fd0d8" stop-opacity=".35"/><stop offset="1" stop-color="#9fd0d8" stop-opacity="0"/></linearGradient>
<path id="cv" d="M88 1100S94 1090 100 1090S107.500 1105 115 1105S122.500 1118 130 1118S137.500 1108 145 1108S152.500 1120 160 1120S167.500 1098 175 1098S181.500 1120 188 1120S196.500 1095 205 1095S211.500 1118 218 1118S226.500 1108 235 1108S242.500 1118 250 1118S257.500 1112 265 1112S272.500 1115 280 1115S286 1107 292 1107S298.500 1118 305 1118S313.500 1097 322 1097S328.500 1118 335 1118S345 1118 355 1118S365 1100 375 1100S385 1095 395 1095S402.500 1120 410 1120S417.500 1108 425 1108S432.500 1115 440 1115S447.500 1107 455 1107S462.500 1110 470 1110S480 1112 490 1112S497.500 1120 505 1120S512.500 1112 520 1112S532.500 1107 545 1107S552.500 1120 560 1120S567.500 1108 575 1108S582.500 1118 590 1118S597.500 1108 605 1108S612.500 1118 620 1118S627.500 1110 635 1110S642.500 1120 650 1120S675 1120 700 1120S712.500 1115 725 1115S731.500 1120 738 1120S744 990 750 990S757.500 1120 765 1120S797.500 1115 830 1115S841 1085 852 1085S860 1120 868 1120S874 1120 880 1120S889 1085 898 1085S906.500 1120 915 1120S935 1120 955 1120"/></defs>
<path d="M738 1120L750 985L765 1120Z" fill="url(#ar)"/>
<path d="M88 1100L130 1118L375 1100L395 1095L650 1120H955V1165H88Z" fill="url(#ar)" opacity=".5"/>
<path d="M738 1120S744 970 750 970S757.500 1120 765 1120" fill="none" stroke="#3a78f0" stroke-width="3.400"/>
<use href="#cv" transform="translate(1 2)" fill="none" stroke="#3a78f0" stroke-width="3.400"/>
<use href="#cv" fill="none" stroke="#2a9e70" stroke-width="3.400"/>
</svg>

<div class="rc" style="top:396px;height:160px"></div>
<div class="t s14 m k" style="left:1339px;top:412px">存储读写</div>
<div class="t b" style="right:30px;top:412px;letter-spacing:.8px;font-size:12.500px">R 0 B/s</div>
<div class="t gr" style="right:30px;top:434px;letter-spacing:.8px;font-size:12.500px">W 0 B/s</div>
<div class="abs" style="left:1339px;top:539px;width:290px;height:1px;background:#7fb0a8"></div>

<div class="rc" style="top:562px;height:160px"></div>
<div class="t s14 m k" style="left:1339px;top:578px">存储空间</div>
<svg style="left:1340px;top:619px" width="19" height="19" viewBox="0 0 19 19"><path d="M1 4.500L8.500 1L16 4.500L8.500 8Z" fill="#b8c8dc"/><path d="M1 4.500L8.500 8V17L1 13.500Z" fill="#3d4d60"/><path d="M16 4.500L8.500 8V17L16 13.500Z" fill="#5c6c80"/><circle cx="13" cy="13.500" r="5" fill="#e56a1c"/><path d="M13 10.500V14M13 15.300V16.300" stroke="#fff" stroke-width="1.300"/></svg>
<div class="t d" style="left:1367px;top:618px">存储空间</div>
<div class="abs" style="left:1420px;top:618px;width:45px;height:20px;line-height:20px;text-align:center;background:#fdf2e2;border-radius:4px;color:#e8650a;font-size:12px">未挂载</div>
</body></html>
